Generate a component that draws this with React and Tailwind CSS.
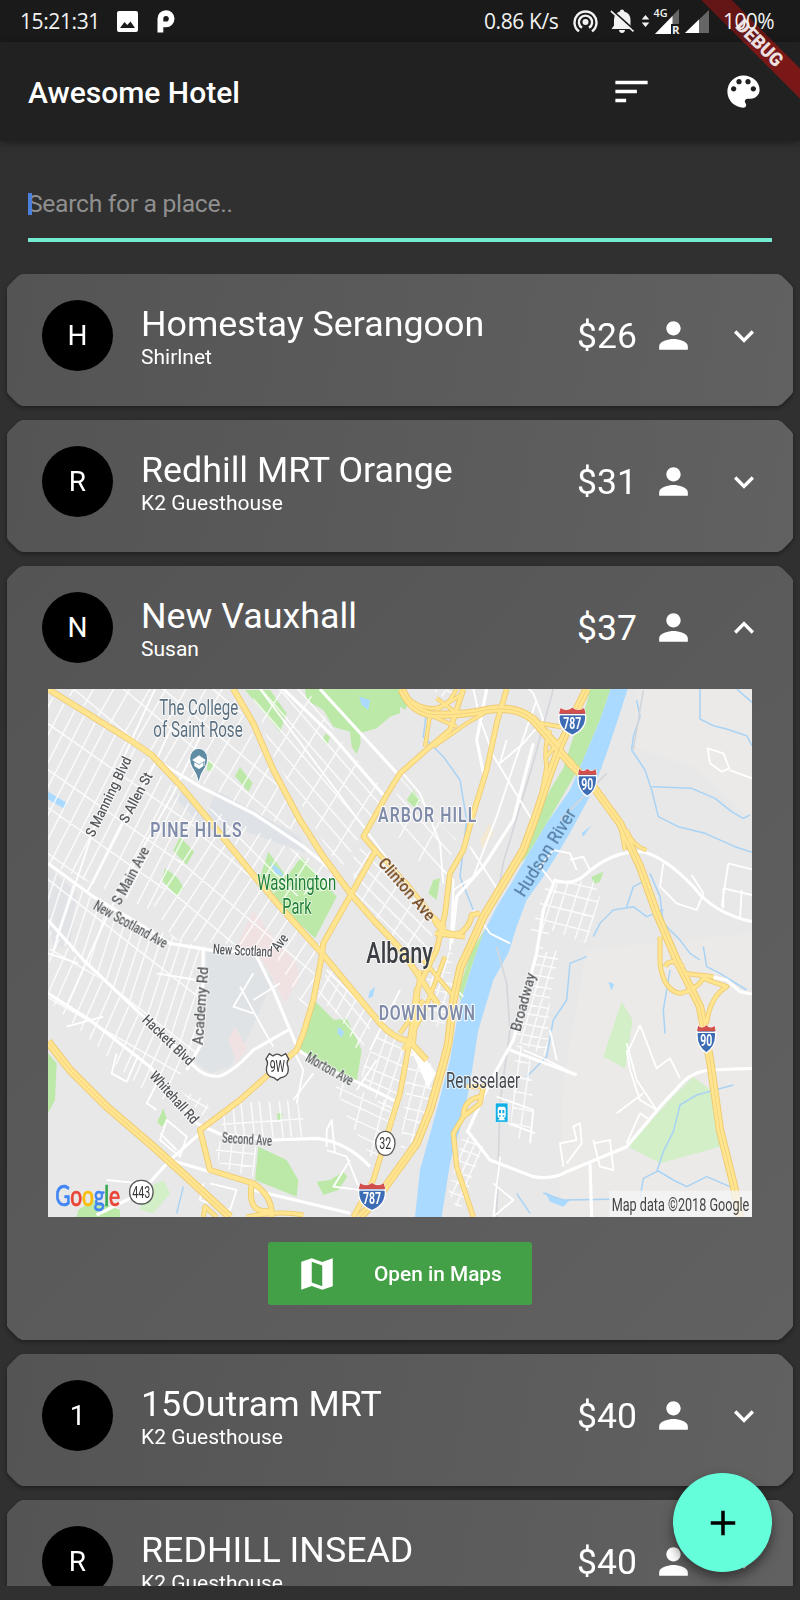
import React from "react";

const ICONS = {
  sort: "M3 18h6v-2H3v2zM3 6v2h18V6H3zm0 7h12v-2H3v2z",
  palette:
    "M12 3c-4.97 0-9 4.03-9 9s4.03 9 9 9c.83 0 1.5-.67 1.5-1.5 0-.39-.15-.74-.39-1.01-.23-.26-.38-.61-.38-.99 0-.83.67-1.5 1.5-1.5H16c2.76 0 5-2.24 5-5 0-4.42-4.03-8-9-8zm-5.5 9c-.83 0-1.5-.67-1.5-1.5S5.67 9 6.5 9 8 9.67 8 10.5 7.33 12 6.5 12zm3-4C8.67 8 8 7.33 8 6.5S8.67 5 9.5 5s1.5.67 1.5 1.5S10.33 8 9.5 8zm5 0c-.83 0-1.5-.67-1.5-1.5S13.67 5 14.5 5s1.5.67 1.5 1.5S15.33 8 14.5 8zm3 4c-.83 0-1.5-.67-1.5-1.5S16.67 9 17.5 9s1.5.67 1.5 1.5-.67 1.5-1.5 1.5z",
  person:
    "M12 12c2.21 0 4-1.79 4-4s-1.79-4-4-4-4 1.79-4 4 1.79 4 4 4zm0 2c-2.67 0-8 1.34-8 4v2h16v-2c0-2.66-5.33-4-8-4z",
  more: "M16.59 8.59L12 13.17 7.41 8.59 6 10l6 6 6-6z",
  less: "M12 8l-6 6 1.41 1.41L12 10.83l4.59 4.58L18 14z",
  map: "M21 3L15 5.1 9 3 3 5V21L9 18.900l6 2.100 6-2V3zM15 19l-6-2.110V5l6 2.110V19z",
  add: "M19 13h-6v6h-2v-6H5v-2h6V5h2v6h6v2z",
};

function Icon({ name, className = "size-[43px]" }) {
  return (
    <svg viewBox="0 0 24 24" className={`shrink-0 fill-current ${className}`} aria-hidden="true">
      <path d={ICONS[name]} />
    </svg>
  );
}

/* ---------- street map ---------- */

/* Two families of parallel streets inside a polygon. */
function Streets({ id, area, families }) {
  const pts = area.split(" ").map((p) => p.split(",").map(Number));
  const cx = pts.reduce((a, p) => a + p[0], 0) / pts.length;
  const cy = pts.reduce((a, p) => a + p[1], 0) / pts.length;
  let d = "";
  for (const [angle, gap, dash] of families) {
    const t = (angle * Math.PI) / 180;
    const ux = Math.cos(t);
    const uy = Math.sin(t);
    let i = 0;
    for (let o = -700; o <= 700; o += gap) {
      const w = ((i * 7) % 5) * dash;
      const x = cx - uy * (o + w);
      const y = cy + ux * (o + w);
      d += `M${(x - ux * 800).toFixed(1)} ${(y - uy * 800).toFixed(1)}L${(x + ux * 800).toFixed(1)} ${(y + uy * 800).toFixed(1)}`;
      i += 1;
    }
  }
  return (
    <g>
      <clipPath id={id}>
        <polygon points={area} />
      </clipPath>
      <path d={d} clipPath={`url(#${id})`} stroke="#fff" strokeWidth="4.500" fill="none" opacity="0.8" />
    </g>
  );
}

const GRIDS = [
  { id: "g1", area: "24,45 270,190 400,320 500,430 330,690 24,550", families: [[-63, 36, 1], [35, 105, 4]] },
  { id: "g2", area: "60,27 570,27 700,290 820,480 590,370 330,220", families: [[-60, 48, 2], [40, 88, 4]] },
  { id: "g3", area: "500,380 860,560 900,620 720,660 640,570", families: [[-58, 42, 2], [45, 80, 3]] },
  { id: "g4", area: "630,27 800,27 900,180 1040,340 960,470 900,570 700,230", families: [[49, 40, 1], [-58, 78, 3]] },
  { id: "g5", area: "940,500 1010,520 1180,700 1170,880 1080,790 940,640", families: [[45, 34, 1], [-58, 62, 2]] },
  { id: "g6", area: "330,660 500,420 720,690 850,800 800,1000 690,800 400,780", families: [[-57, 40, 1], [40, 95, 3]] },
  { id: "g7", area: "24,560 220,700 480,800 470,1120 440,1120 130,840 24,760", families: [[-72, 30, 1], [38, 130, 3]] },
  { id: "g8", area: "30,750 130,850 440,1140 390,1260 330,1250 24,960", families: [[-66, 34, 1], [30, 120, 4]] },
  { id: "g9", area: "870,850 1000,1020 960,1130 900,1010 830,950", families: [[-62, 34, 1], [50, 48, 1]] },
  { id: "g10", area: "1030,1030 1130,1110 1060,1340 960,1180", families: [[-72, 30, 1], [24, 42, 2]] },
  { id: "g11", area: "1110,1080 1200,1180 1130,1370 1080,1420", families: [[-76, 34, 0], [14, 38, 2]] },
  { id: "g12", area: "560,1270 770,1260 810,1370 640,1375 540,1350", families: [[-96, 28, 1], [-4, 70, 0]] },
  { id: "g13", area: "880,1200 1060,1270 1010,1460 920,1310", families: [[25, 34, 2], [-76, 62, 2]] },
  { id: "g14", area: "1520,610 1660,600 1680,650 1640,790 1530,750 1500,830 1470,760", families: [[-72, 34, 1], [14, 42, 2]] },
  { id: "g15", area: "1490,820 1560,810 1530,950 1520,1130 1420,1080", families: [[-74, 26, 0], [10, 30, 1]] },
  { id: "g16", area: "1430,1080 1470,1130 1480,1290 1465,1380 1410,1370", families: [[-82, 32, 0], [12, 46, 1]] },
  { id: "g17", area: "1270,1360 1330,1400 1260,1600 1225,1540", families: [[-66, 24, 0], [20, 32, 1]] },
  { id: "g18", area: "1160,900 1240,800 1210,1060 1150,1000", families: [[-74, 26, 0], [12, 30, 1]] },
  { id: "g19", area: "1180,30 1250,27 1220,60", families: [[-60, 24, 0], [30, 30, 1]] },
  { id: "g20", area: "1080,290 1210,440 1250,480 1200,620 1050,440", families: [[48, 46, 2], [-62, 90, 2]] },
  { id: "g21", area: "500,1260 520,1340 470,1290 420,1230", families: [[-60, 30, 0], [30, 30, 1]] },
  { id: "g22", area: "520,1380 650,1400 640,1490 540,1460", families: [[-84, 36, 0], [6, 40, 1]] },
];

const MINOR = [
  "M190 1010l-110 30M230 1120l-15 60 45 25 35-80M350 1210l-30 60 30 20",
  "M345 27L270 190 170 420 110 600 40 810",
  "M400 130L340 260 240 440 140 640",
  "M490 150L400 340 300 520 210 690 150 820 80 980",
  "M660 27l420 560",
  "M1300 27l20 90 40 110 120 200",
  "M1490 60l-60 170-60 180-70 180-60 40-10 180",
  "M1400 180l-20 70 70-60 60-70-30-80-40-40",
  "M1080 270l60 70 60 150 10 120",
  "M1290 500l90 140M1200 560l40 40 0 120",
  "M1540 610l-40-50 40-50 50 10 20 50M1590 540l40-10 20 40",
  "M2003 205L2050 220 2068 265 2045 275 2010 250ZM2068 270L2136 295",
  "M1870 550l-10 70 50 50 60 20 20-50-35-55",
  "M2065 550l-20 130M2065 550l71 18M2050 625l86 20M2050 625l0 60M2105 630l-5 85",
  "M640 1000l-60-20 60-100M600 920l60 110 40 70M640 960l80-50",
  "M1270 950l-40-40M1300 690l50 70 60 30",
  "M1730 1300l80-60M1760 1090l30 110 60 90-50-30-30-90-10-60M1800 1035l-40 90M1800 1035l50 130 40-30 30 60",
  "M1760 1390l40-90 30 20-60 70M1660 1390l50-10 10 90-40-10-20-80M1570 1460l-10-70 50-10-10-40 20-10 5 60-45 60",
  "M1380 1430l-20 180M1405 1330l80 30M1360 1510l60 50-60 50M1370 1250l110 40-10 100",
  "M860 1400l0-50 15-30 10 100M860 1410l60 20 40 100-80-10 50-80M490 1510l-10 50 90 30 20-60-80-20",
  "M380 1320l60 50-20 60-60-50zM360 1360l50 50",
  "M760 1110l30 60-20 100M820 1180l-60 80M1450 1110l70 30 80 40M1530 1050l20 90",
  "M200 1500l100 10M24 820l90 30M350 880l120 20",
  "M1080 930L990 1110M1010 1140l-60 90M860 870l170 170",
];

const WHITE = [
  "M330 230L480 320 640 400 790 500 900 590",
  "M24 550L160 650 270 715 390 790 520 812 690 820",
  "M24 720L130 840 300 1000 440 1130Q480 1195 540 1188 580 1175 640 1110L745 1050",
  "M24 940L150 1020 330 1160 470 1330 540 1362 700 1380 830 1375Q920 1385 990 1460",
  "M490 800L485 1090 440 1170",
  "M650 830L700 930 775 1110 860 1165 960 1210 1080 1270",
  "M480 1360L390 1440 510 1475M640 1530L930 1600M390 1440L300 1540 170 1605",
  "M1540 600Q1600 620 1640 580 1720 510 1810 515 1880 535 1960 620 2020 700 2136 725",
  "M1545 600L1510 690 1490 820 1420 1080 1370 1170 1330 1250 1285 1350",
  "M1280 1350L1350 1440 1480 1490Q1540 1500 1580 1475L1760 1400 1860 1280 1930 1205Q1960 1175 2010 1170L2136 1165",
  "M1650 1450L1655 1611M1410 1110L1610 1185",
  "M2010 890L2060 900 2100 935 2136 942",
  "M1340 27L1310 180 1335 300",
  "M730 27L870 160 1030 345M840 27L1080 290",
  "M1480 190L1420 420 1330 560 1250 650 1235 790",
];

const YELLOW = [
  ["M24 27L270 180 335 225 415 310 500 412 640 585 720 680 850 825 1020 1030Q1060 1075 1110 1085L1160 1140", 14],
  ["M580 27L640 130 700 270 780 420 850 530 935 645 1000 720 1080 805 1195 975", 14],
  ["M1270 27L1230 150 1170 200 1080 280 1040 345 970 470 1010 515", 12],
  ["M1005 515L935 640 850 790 845 830 820 960 790 1060 770 1110 690 1180 600 1260 480 1350 510 1470 640 1510Q700 1550 695 1611M635 1510Q620 1611 700 1590", 13],
  ["M970 470L1010 515 1100 610 1180 710 1215 745", 9],
  ["M1400 27L1370 130 1340 270 1300 400 1270 510 1230 580 1215 700 1190 810 1130 930 1110 1080 1080 1240 1040 1370 1000 1500 940 1611", 12],
  ["M1180 710Q1200 770 1260 760 1290 740 1295 705L1320 700M1185 760L1275 770", 12],
  ["M1170 105L1160 170 1155 200M1110 60Q1180 110 1230 60L1250 27M1180 200L1280 130 1340 95M1170 105L1250 140M1190 55L1250 100M1190 90L1270 40", 8],
  ["M1530 150Q1510 200 1520 260L1500 370M1500 130L1560 140 1600 90M1520 230L1600 130M1530 180L1600 250M1480 110L1560 200 1530 260", 9],
  ["M1740 430L1755 510M1760 450Q1780 500 1820 510", 8],
  ["M1860 770L1860 850Q1870 930 1920 940 1970 930 1990 895L2060 920Q2010 950 2000 1030M1875 860Q1890 830 1930 860M1930 880L2020 890", 10],
  ["M1300 1611L1250 1460 1240 1360 1270 1310 1320 1270 1330 1220 1280 1220M1270 1310Q1270 1260 1320 1250", 11],
  ["M1150 840L1250 960M1140 870L1120 1100M1215 830L1150 1000 1090 1110M1080 1060L1150 960", 9],
  ["M490 1611L495 1580 530 1611M620 1611Q720 1590 790 1605", 10],
];

const HIGHWAYS = [
  "M1085 27Q1110 90 1170 103 1260 108 1340 90 1430 75 1480 120L1590 250 1660 320 1740 430 1800 560 1850 700 1910 840 1980 980 2010 1140 2040 1350 2080 1510 2100 1611",
  "M1640 27L1590 130 1560 200 1530 280 1490 400 1450 510 1390 610 1330 710 1290 800 1262 860 1240 960 1225 1090 1210 1150 1170 1290 1130 1390 1080 1460 1000 1570 960 1611",
  "M24 1085L90 1170 200 1280 340 1400 450 1500 570 1611",
];

const STREAMS = [
  "M1790 60l10 50-20 60-5 40 40 60 20 60 20 80 60 30 80 20 90 40 60 20 76 10",
  "M1835 320l120 5 70 30 50 40 35 20 20-10",
  "M1980 27l0 90 40 20 40 10 60 20 16 30M2090 27l46 40",
  "M1160 90l-10 80 60 60 50 70 20 120-20 170 40 100",
  "M1660 770l20-40 40-40 60-10 40 30 50-20M1760 680l20-60 40-20M1830 580l30 70 10 80 50 50 30 40 30 20",
  "M1640 830l-50 20-10 110-40 60-20 110-60 60",
  "M1890 870l-20 120 5 70M1990 800l10 60 40 20 80 50",
  "M2080 1215l-110 30-50 30-20 80-30 60-20 60-40 20-10 60M1850 1470l50 30 40 20 60-30 70 30",
  "M1510 1540l60 20 140-2M1430 1540l40 60",
  "M430 1520l-20 80",
];

const LABELS = [
  ["The College", 476, 105, 0, 237, 64, "#5b7080", 400],
  ["of Saint Rose", 474, 172, 0, 268, 64, "#5b7080", 400],
  ["Washington", 770, 631, 0, 237, 64, "#1f8035", 400],
  ["Park", 771, 702, 0, 88, 64, "#1f8035", 400],
  ["Albany", 1079, 848, 0, 200, 86, "#3c3f44", 500],
  ["Rensselaer", 1329, 1225, 0, 222, 64, "#45494e", 400],
  ["S Manning Blvd", 205, 350, -64, 262, 43, "#55585b", 400, true],
  ["S Allen St", 287, 353, -62, 165, 43, "#55585b", 400, true],
  ["S Main Ave", 272, 587, -62, 190, 43, "#55585b", 400, true],
  ["New Scotland Ave", 272, 733, 29, 246, 43, "#55585b", 400, true],
  ["New Scotland", 608, 811, 3, 178, 43, "#55585b", 400, true],
  ["Ave", 719, 787, -52, 52, 43, "#55585b", 400, true],
  ["Clinton Ave", 1100, 628, 49, 232, 48, "#6e4117", 400, true],
  ["Academy Rd", 482, 978, -86, 235, 43, "#55585b", 400, true],
  ["Hackett Blvd", 385, 1080, 44, 196, 43, "#55585b", 400, true],
  ["Whitehall Rd", 403, 1252, 48, 196, 43, "#55585b", 400, true],
  ["Second Ave", 621, 1378, 4, 150, 43, "#55585b", 400, true],
  ["Morton Ave", 869, 1167, 29, 157, 43, "#55585b", 400, true],
  ["Broadway", 1450, 966, -75, 180, 43, "#55585b", 400, true],
];

/* Neighbourhood names: condensed, letter-spaced capitals. */
const DISTRICTS = [
  ["PINE HILLS", 331, 470, 274],
  ["ARBOR HILL", 1014, 425, 295],
  ["DOWNTOWN", 1016, 1020, 289],
];

function Interstate({ x, y, w, label }) {
  const h = 82;
  return (
    <g transform={`translate(${x} ${y})`}>
      <path
        d={`M${w * 0.06} 4Q${w * 0.28} 14 ${w / 2} 3Q${w * 0.72} 14 ${w * 0.94} 4Q${w * 1.18} 60 ${w / 2} ${h + 2}Q${-w * 0.18} 60 ${w * 0.06} 4Z`}
        fill="#3c6cb4"
        stroke="#fff"
        strokeWidth="4"
      />
      <path d={`M${w * 0.06} 2Q${w * 0.28} 14 ${w / 2} 1Q${w * 0.72} 14 ${w * 0.94} 2L${w} 19H0Z`} fill="#d2504c" />
      <path d={`M${-w * 0.01} 22H${w * 1.01}`} stroke="#fff" strokeWidth="4" />
      <text x={w / 2} y="64" textAnchor="middle" fontSize="50" fontWeight="700" fill="#fff" textLength={label.length * 18} lengthAdjust="spacingAndGlyphs">
        {label}
      </text>
    </g>
  );
}

function StreetMap() {
  return (
    <svg viewBox="24 27 2112 1584" preserveAspectRatio="none" className="block h-[528px] w-[704px] font-['Roboto',sans-serif]">
      <rect x="24" y="27" width="2112" height="1584" fill="#e8e8e8" />
      <polygon points="1790,27 2136,27 2136,420 1960,260 1780,200" fill="#ebeae8" />
      <polygon points="1640,810 2136,760 2136,1611 1560,1611 1570,1200" fill="#ebeae8" />
      <polygon points="430,330 500,400 530,330 780,470 800,520 520,420 480,430 400,350" fill="#dfe3e7" />
      <polygon points="500,810 640,830 700,900 620,1080 570,1160 510,1180 460,1140 490,1060" fill="#dfe3e6" />
      <polygon points="24,560 110,640 90,800 40,800 24,720" fill="#e1e3e6" />
      <polygon points="640,690 690,760 770,850 778,900 735,970 690,880 660,830 590,800" fill="#f0e2e2" />
      <polygon points="585,1040 622,1105 590,1150 565,1080" fill="#f0e2e2" />
      <polygon points="1320,480 1350,430 1360,460 1330,510" fill="#f3e8d2" />

      <g fill="#bce9a8">
        <polygon points="615,30 690,30 740,100 720,155" />
        <path d="M795 27L800 60 850 90 880 140 930 155 935 200 950 222 962 190 960 160 1010 145 1050 110 1080 100V27Z" />
        <polygon points="848,180 856,160 870,172 862,195" />
        <polygon points="600,262 638,310 625,335 585,288" />
        <polygon points="420,470 462,515 440,555 400,512" />
        <polygon points="375,565 410,590 432,625 410,650 365,600" />
        <polygon points="685,515 740,590 785,530 890,650 825,775 745,700 660,590" />
        <polygon points="822,960 882,1020 920,1015 965,1110 950,1205 780,1110" />
        <polygon points="24,1120 50,1150 45,1260 24,1300" />
        <polygon points="655,1400 740,1440 775,1500 770,1550 645,1500" />
        <polygon points="370,1285 382,1320 365,1340 352,1325" />
        <polygon points="830,1505 870,1500 910,1475 922,1490 895,1530 850,1545" />
        <polygon points="115,1590 160,1560 240,1590 240,1611 110,1611" />
        <polygon points="1120,330 1142,365 1125,385 1100,360" />
        <polygon points="1080,40 1105,70 1095,90 1080,80" />
        <polygon points="1180,600 1200,595 1190,660 1165,640" />
        <polygon points="1655,590 1690,575 1680,605 1660,612" />
        <path d="M1650 27H1712L1680 120 1625 250 1520 430 1460 530 1440 550 1480 430 1530 330 1570 265 1600 170 1640 70Z" />
        <polygon points="1340,740 1305,830 1262,960 1255,940 1290,820" />
        <polygon points="712,1300 728,1300 725,1325 712,1320" />
        <polygon points="505,240 520,250 515,275 500,270" />
      </g>
      <g fill="#d2efc7">
        <polygon points="1745,965 1778,1020 1755,1165 1690,1130" />
        <polygon points="1960,1190 2010,1230 2040,1400 1860,1450 1765,1400 1880,1270" />
        <polygon points="310,1530 370,1500 390,1540 340,1600 300,1590" />
      </g>

      <g fill="#aadaff">
        <path d="M1712 27H1763L1730 130 1700 220 1660 330 1600 440 1560 510 1510 590 1460 660 1430 740 1405 820 1360 900 1315 1050 1290 1210 1270 1310 1230 1450 1205 1611H1125L1140 1470 1190 1290 1230 1140 1260 970 1305 830 1330 760 1370 680 1420 600 1460 530 1520 430 1590 330 1625 250 1680 120Z" />
        <polygon points="958,50 990,60 985,90 965,75" />
        <polygon points="24,335 80,368 75,388 24,358" />
        <polygon points="690,545 720,570 732,590 705,580" />
        <polygon points="895,1040 912,1055 905,1072 892,1060" />
        <polygon points="988,935 1005,920 998,950 985,955" />
        <polygon points="1625,460 1655,435 1640,455 1630,470" />
        <polygon points="1705,905 1722,912 1715,932" />
        <polygon points="1515,1535 1560,1560 1590,1560 1570,1580 1530,1565" />
      </g>
      <g fill="none" stroke="#a9d3f5" strokeWidth="4.500" strokeLinejoin="round">
        {STREAMS.map((d) => (
          <path key={d} d={d} />
        ))}
      </g>
      <path
        d="M1370 800l30 110 10 140-30 220-10 340M1560 420l140-140M1780 210l30-180M1540 27l-60 220-90 300-20 120"
        fill="none"
        stroke="#d3d6da"
        strokeWidth="5"
      />

      {GRIDS.map((g) => (
        <Streets key={g.id} {...g} />
      ))}
      <g fill="none" stroke="#fff" strokeWidth="5.500" strokeLinejoin="round">
        {MINOR.map((d) => (
          <path key={d} d={d} />
        ))}
      </g>
      <g fill="none" stroke="#fff" strokeWidth="9.500" strokeLinejoin="round">
        {WHITE.map((d) => (
          <path key={d} d={d} />
        ))}
      </g>
      <path d="M1120 1100L1180 1180 1165 1210 1130 1130Z" fill="#fff" stroke="#fff" strokeWidth="14" />

      <g fill="none" stroke="#efca70" strokeLinejoin="round">
        {YELLOW.map(([d, w]) => (
          <path key={d} d={d} strokeWidth={w + 5} />
        ))}
        {HIGHWAYS.map((d) => (
          <path key={d} d={d} strokeWidth="25" />
        ))}
      </g>
      <g fill="none" stroke="#ffe590" strokeLinejoin="round">
        {YELLOW.map(([d, w]) => (
          <path key={d} d={d} strokeWidth={w} />
        ))}
        {HIGHWAYS.map((d) => (
          <path key={d} d={d} strokeWidth="19" />
        ))}
      </g>
      <g fill="none" stroke="#f4cf78" strokeWidth="2.500">
        {HIGHWAYS.map((d) => (
          <path key={d} d={d} />
        ))}
      </g>

      {LABELS.map(([text, x, y, angle, len, size, fill, weight, mid]) => (
        <text
          key={text + x}
          transform={`translate(${x} ${y}) rotate(${angle})`}
          textAnchor="middle"
          dominantBaseline={mid ? "central" : "auto"}
          textLength={len}
          lengthAdjust="spacingAndGlyphs"
          fontSize={size}
          fontWeight={mid ? 500 : weight}
          fill={fill}
          stroke="#fff"
          strokeOpacity="0.75"
          strokeWidth="6"
          strokeLinejoin="round"
          paintOrder="stroke"
        >
          {text}
        </text>
      ))}
      {DISTRICTS.map(([text, x, y, len]) => (
        <text
          key={text}
          transform={`translate(${x} ${y}) scale(0.820 1)`}
          textLength={len / 0.82}
          fontSize="58"
          fontWeight="600"
          fill="#7f8ba8"
          stroke="#fff"
          strokeOpacity="0.85"
          strokeWidth="7"
          strokeLinejoin="round"
          paintOrder="stroke"
        >
          {text}
        </text>
      ))}
      <text transform="translate(1516 518) rotate(-58)" textAnchor="middle" dominantBaseline="central" textLength="298" lengthAdjust="spacingAndGlyphs" fontSize="56" fill="#4d7299">
        Hudson River
      </text>

      <path d="M476 309Q470 280 456 262Q449 250 449 236A27 31 0 0 1 503 236Q503 250 496 262Q482 280 476 309Z" fill="#5f8ca3" stroke="#fff" strokeWidth="3" />
      <path d="M458 240L477 227 496 240 477 252ZM464 248V258L477 266 489 258V248L477 256ZM493 240V258" fill="#fff" stroke="#fff" strokeWidth="2" />

      <Interstate x={1557} y={82} w={80} label="787" />
      <Interstate x={1614} y={265} w={56} label="90" />
      <Interstate x={956} y={1508} w={80} label="787" />
      <Interstate x={1971} y={1035} w={56} label="90" />

      <rect x="269" y="1501" width="70" height="71" rx="33" fill="#fff" stroke="#5a5a5a" strokeWidth="4" />
      <text x="304" y="1555" textAnchor="middle" fontSize="48" textLength="54" lengthAdjust="spacingAndGlyphs" fill="#333">443</text>
      <ellipse cx="1036" cy="1390" rx="29" ry="36" fill="#fff" stroke="#5a5a5a" strokeWidth="4" />
      <text x="1036" y="1407" textAnchor="middle" fontSize="48" textLength="36" lengthAdjust="spacingAndGlyphs" fill="#333">32</text>
      <path
        d="M688 1121L699 1128Q712 1117 724 1128L737 1121 746 1137Q738 1148 744 1160 748 1182 733 1190 720 1192 712 1201 704 1192 691 1190 676 1182 680 1160 686 1148 678 1137Z"
        fill="#fff"
        stroke="#4b4b4b"
        strokeWidth="4"
      />
      <text x="712" y="1177" textAnchor="middle" fontSize="48" textLength="46" lengthAdjust="spacingAndGlyphs" fill="#333">9W</text>

      <rect x="1366" y="1269" width="38" height="58" rx="3" fill="#12afe5" stroke="#fff" strokeWidth="2" />
      <path d="M1377 1280H1393Q1397 1282 1397 1288V1308Q1396 1314 1391 1315L1396 1321H1374L1379 1315Q1373 1313 1373 1308V1288Q1373 1282 1377 1280Z" fill="#fff" />
      <path d="M1377 1290H1383V1300H1377ZM1387 1290H1393V1300H1387ZM1377 1306H1382V1310H1377ZM1388 1306H1393V1310H1388Z" fill="#12afe5" />

      <text transform="translate(46 1577) scale(0.730 1)" fontSize="86" fontWeight="500" letterSpacing="-1" fontFamily="Lato" strokeLinejoin="round">
        <tspan fill="#4285f4" stroke="#4285f4" strokeWidth="2">G</tspan>
        <tspan fill="#ea4335" stroke="#ea4335" strokeWidth="2">o</tspan>
        <tspan fill="#fbbc05" stroke="#fbbc05" strokeWidth="2">o</tspan>
        <tspan fill="#4285f4" stroke="#4285f4" strokeWidth="2">g</tspan>
        <tspan fill="#34a853" stroke="#34a853" strokeWidth="2">l</tspan>
        <tspan fill="#ea4335" stroke="#ea4335" strokeWidth="2">e</tspan>
      </text>

      <rect x="1708" y="1532" width="428" height="79" fill="#f5f5f5" fillOpacity="0.8" />
      <text x="1715" y="1592" fontSize="55" textLength="413" lengthAdjust="spacingAndGlyphs" fill="#444">
        Map data ©2018 Google
      </text>
    </svg>
  );
}

/* ---------- app chrome ---------- */

function StatusBar() {
  return (
    <div className="flex h-[42px] shrink-0 items-center bg-[#1a1a1a] pr-[25px] pl-[20px] font-['Open_Sans',sans-serif] text-[21px] leading-none text-[#f2f2f2]">
      <span className="w-[97px] whitespace-nowrap tracking-[-0.400px]">15:21:31</span>
      <svg viewBox="0 0 21 21" className="size-[21px]">
        <path d="M2 0H19A2 2 0 0 1 21 2V19A2 2 0 0 1 19 21H2A2 2 0 0 1 0 19V2A2 2 0 0 1 2 0ZM3 17H18L13.500 10.500L10.300 14L7.500 11Z" fill="#fff" fillRule="evenodd" />
      </svg>
      <svg viewBox="0 0 18 23" className="ml-[19px] h-[23px] w-[18px]">
        <path d="M0.500 22.500V9A8.500 8.500 0 1 1 9 17.200H6.300V22.500ZM9 6A2.800 2.800 0 0 0 6.300 9V11.600H9A2.800 2.800 0 1 0 9 6Z" fill="#fff" fillRule="evenodd" />
      </svg>
      <span className="ml-auto w-[89px] whitespace-nowrap tracking-[-0.400px]">0.86 K/s</span>
      <svg viewBox="0 0 25 24" className="h-[24px] w-[25px]" fill="none" stroke="#f2f2f2" strokeWidth="2.400">
        <circle cx="12.500" cy="13" r="3" fill="#f2f2f2" stroke="none" />
        <path d="M6 22.400A11 11 0 1 1 19 22.400" />
        <path d="M9 18.800A6.600 6.600 0 1 1 16 18.800" />
      </svg>
      <svg viewBox="0 0 24 24" className="ml-[12px] size-[24px]">
        <path d="M12 0.500Q14 0.500 14.200 2.600Q20.500 4.500 20.500 11V16.500L23 20H1.500L4 16.500V11Q4 4.500 9.800 2.600Q10 0.500 12 0.500ZM9 21H15Q14.700 24 12 24Q9.300 24 9 21Z" fill="#f2f2f2" />
        <path d="M1 2L23.500 22.300" stroke="#f2f2f2" strokeWidth="1.800" />
        <path d="M2.200 1L24 20.700" stroke="#1a1a1a" strokeWidth="1.600" />
      </svg>
      <svg viewBox="0 0 38 28" className="ml-[7px] h-[28px] w-[38px] overflow-visible">
        <path d="M4.500 8L8.300 12.500H0.700ZM4.500 20L0.700 15.500H8.300Z" fill="#f2f2f2" />
        <path d="M38 2V27H14Z" fill="#666" />
        <path d="M31.500 9V27H14Z" fill="#fff" />
        <rect x="30" y="17" width="9" height="11" fill="#1a1a1a" />
        <text x="12.500" y="10" fontSize="11" fontWeight="600" fill="#f2f2f2" textLength="14" lengthAdjust="spacingAndGlyphs">4G</text>
        <text x="31" y="27" fontSize="11" fontWeight="700" fill="#f2f2f2" textLength="7.500" lengthAdjust="spacingAndGlyphs">R</text>
      </svg>
      <svg viewBox="0 0 24 24" className="ml-[6px] size-[24px]">
        <path d="M24 1V24H0Z" fill="#666" />
        <path d="M14 10.500V24H0Z" fill="#fff" />
      </svg>
      <span className="relative z-30 ml-[14px] w-[52px] whitespace-nowrap tracking-[-0.600px]">100%</span>
    </div>
  );
}

function DebugBanner() {
  return (
    <svg viewBox="0 0 100 100" className="absolute top-0 right-0 z-20 size-[100px]" aria-hidden="true">
      <path d="M1.500 0H31.500L100 68.500V98.500Z" fill="#7a1818" />
      <path d="M1.500 0H31.500L73.500 42H43.500Z" fill="#641515" />
      <text transform="translate(59.500 43) rotate(45)" y="6.500" textAnchor="middle" fontSize="19" fontWeight="900" fontFamily="Roboto" textLength="58" lengthAdjust="spacingAndGlyphs" fill="#ece0e0">
        DEBUG
      </text>
    </svg>
  );
}

function PlaceCard({ place }) {
  return (
    <div className="shrink-0 drop-shadow-[0_2px_2px_rgba(0,0,0,0.35)]">
      <article
        className={`${place.open ? "bg-linear-[135deg]" : "bg-linear-[100deg]"} from-[#545454] to-[#616161] pt-[26px] pb-[35px] [clip-path:polygon(0_14px,2px_11px,11px_2px,15px_0,calc(100%-15px)_0,calc(100%-11px)_2px,calc(100%-2px)_11px,100%_14px,100%_calc(100%-14px),calc(100%-2px)_calc(100%-11px),calc(100%-11px)_calc(100%-2px),calc(100%-15px)_100%,15px_100%,11px_calc(100%-2px),2px_calc(100%-11px),0_calc(100%-14px))]`}
      >
        <header className="flex h-[71px] items-center pr-[29px] pl-[35px]">
          <div className="flex size-[71px] items-center justify-center rounded-full bg-black pt-px text-[28px]">{place.name[0]}</div>
          <div className="ml-[28px] grow pt-[2px] whitespace-nowrap">
            <h2 className="text-[35.800px] leading-[41px]">{place.name}</h2>
            <p className="text-[21px] leading-[25px]">{place.host}</p>
          </div>
          <span className="w-[75px] pt-[2px] text-[35.500px] leading-[41px]">${place.price}</span>
          <Icon name="person" />
          <Icon name={place.open ? "less" : "more"} className="ml-[29px] size-[40px]" />
        </header>
        {place.open && (
          <div className="mt-[26px] flex flex-col items-center">
            <StreetMap />
            <button className="mt-[25px] flex h-[63px] w-[264px] items-center rounded-[3px] bg-[#43a047] pl-[28px] text-[20.800px] font-medium">
              <Icon name="map" className="size-[42px]" />
              <span className="ml-[36px] pt-[2px] whitespace-nowrap">Open in Maps</span>
            </button>
          </div>
        )}
      </article>
    </div>
  );
}

const PLACES = [
  { name: "Homestay Serangoon", host: "Shirlnet", price: 26 },
  { name: "Redhill MRT Orange", host: "K2 Guesthouse", price: 31 },
  { name: "New Vauxhall", host: "Susan", price: 37, open: true },
  { name: "15Outram MRT", host: "K2 Guesthouse", price: 40 },
  { name: "REDHILL INSEAD", host: "K2 Guesthouse", price: 40 },
];

export default function App() {
  return (
    <div className="relative flex h-[1600px] w-[800px] flex-col overflow-hidden bg-[#303030] font-['Roboto',sans-serif] text-white">
      <StatusBar />
      <header className="relative flex h-[99px] shrink-0 items-center bg-[#212121] pr-[35px] pl-[28px] shadow-[0_2px_8px_rgba(0,0,0,0.4)]">
        <h1 className="grow pt-px text-[30px] font-medium">Awesome Hotel</h1>
        <Icon name="sort" className="mr-[69px] size-[43px]" />
        <Icon name="palette" />
      </header>
      <DebugBanner />
      <div className="mx-[28px] mt-[37px] flex h-[64px] shrink-0 items-start border-b-4 border-[#73ebcf] pt-[10px]">
        <div className="relative text-[24.700px] leading-[31px] tracking-[-0.320px] text-[#8f8f8f]">
          <span className="absolute top-[5px] left-0 h-[22px] w-[4px] bg-[#4d80dc]" />
          <span className="whitespace-nowrap">Search for a place..</span>
        </div>
      </div>
      <main className="mt-[32px] flex h-[1312px] shrink-0 flex-col gap-[14px] overflow-hidden px-[7px]">
        {PLACES.map((p) => (
          <PlaceCard key={p.name} place={p} />
        ))}
      </main>
      <button className="absolute right-[28px] bottom-[28px] flex size-[99px] items-center justify-center rounded-full bg-[#64ffda] text-black shadow-[0_6px_12px_rgba(0,0,0,0.45)]">
        <Icon name="add" className="size-[42px]" />
      </button>
    </div>
  );
}
